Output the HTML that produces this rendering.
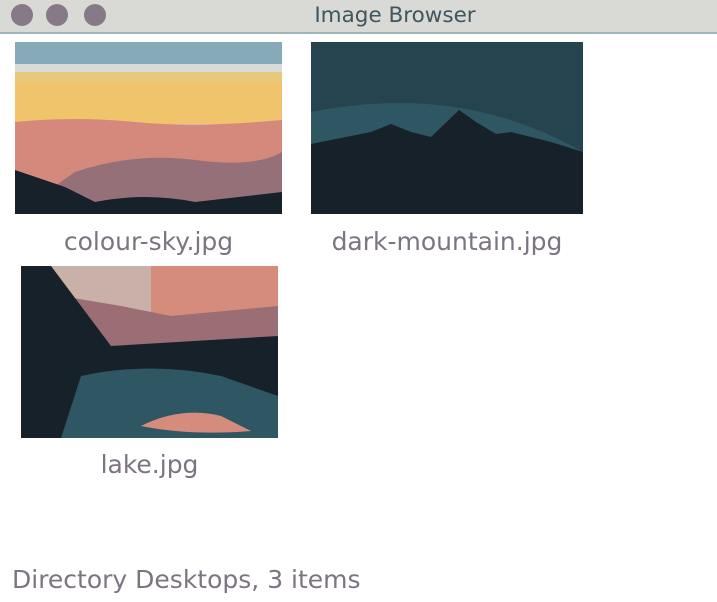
<!DOCTYPE html>
<html><head><style>
body{margin:0;width:717px;height:602px;background:#fff;overflow:hidden;position:relative;font-family:"DejaVu Sans","Liberation Sans",sans-serif}
.tb{position:absolute;left:0;top:0;width:717px;height:32px;background:#d9d9d5;border-bottom:2px solid #9fb4bb}
.c{position:absolute;top:4px;width:22px;height:22px;border-radius:50%;background:#877a88}
.t{position:absolute;left:0;width:717px;top:3px;text-align:center;font-size:21.5px;color:#3e5660;padding-left:73px;box-sizing:border-box}
.im{position:absolute}
.l{position:absolute;font-size:25px;line-height:30px;color:#7d7482;text-align:center;white-space:nowrap}
</style></head><body>
<div class="tb"><div class="c" style="left:11px"></div><div class="c" style="left:46px"></div><div class="c" style="left:84px"></div><div class="t">Image Browser</div></div>

<svg class="im" style="left:15px;top:42px" width="267" height="172" viewBox="0 0 267 172">
<rect width="267" height="172" fill="#d9dbd6"/>
<rect y="0" width="267" height="22" fill="#86aab8"/>
<rect y="30" width="267" height="20" fill="#e6c97a"/>
<rect y="40" width="267" height="42" fill="#efc46a"/>
<path d="M0 80 Q60 74 120 80 T267 78 V172 H0Z" fill="#d5897c"/>
<path d="M60 130 Q120 110 180 118 T267 110 V172 H0Z" fill="#957078"/>
<path d="M0 128 L50 145 L80 160 Q130 150 180 160 L267 150 V172 H0Z" fill="#162129"/>
</svg>
<svg class="im" style="left:311px;top:42px" width="272" height="172" viewBox="0 0 272 172">
<rect width="272" height="172" fill="#2f5663"/>
<path d="M0 0 H272 V110 Q150 40 0 70Z" fill="#25444f"/>
<path d="M0 102 L60 90 L80 82 L100 90 L120 95 L148 68 L165 80 L185 92 L200 90 L240 100 L272 110 V172 H0Z" fill="#162129"/>
</svg>
<svg class="im" style="left:21px;top:266px" width="257" height="172" viewBox="0 0 257 172">
<rect width="257" height="172" fill="#c9b0a8"/>
<rect x="130" width="127" height="50" fill="#d68c7c"/>
<path d="M40 30 L100 40 L150 50 L257 40 V100 H0Z" fill="#9a6e74"/>
<path d="M0 0 H30 L90 80 L257 70 V172 H0Z" fill="#162129"/>
<path d="M60 110 Q130 95 200 110 L257 130 V172 H40Z" fill="#2f5663"/>
<path d="M120 160 Q170 170 230 165 L200 150 Q160 140 120 160Z" fill="#d68c7c"/>
</svg>

<div class="l" style="left:0px;width:297px;top:227px">colour-sky.jpg</div>
<div class="l" style="left:297px;width:300px;top:227px">dark-mountain.jpg</div>
<div class="l" style="left:21px;width:257px;top:450px">lake.jpg</div>
<div class="l" style="left:12px;top:565px;text-align:left">Directory Desktops, 3 items</div>
</body></html>
